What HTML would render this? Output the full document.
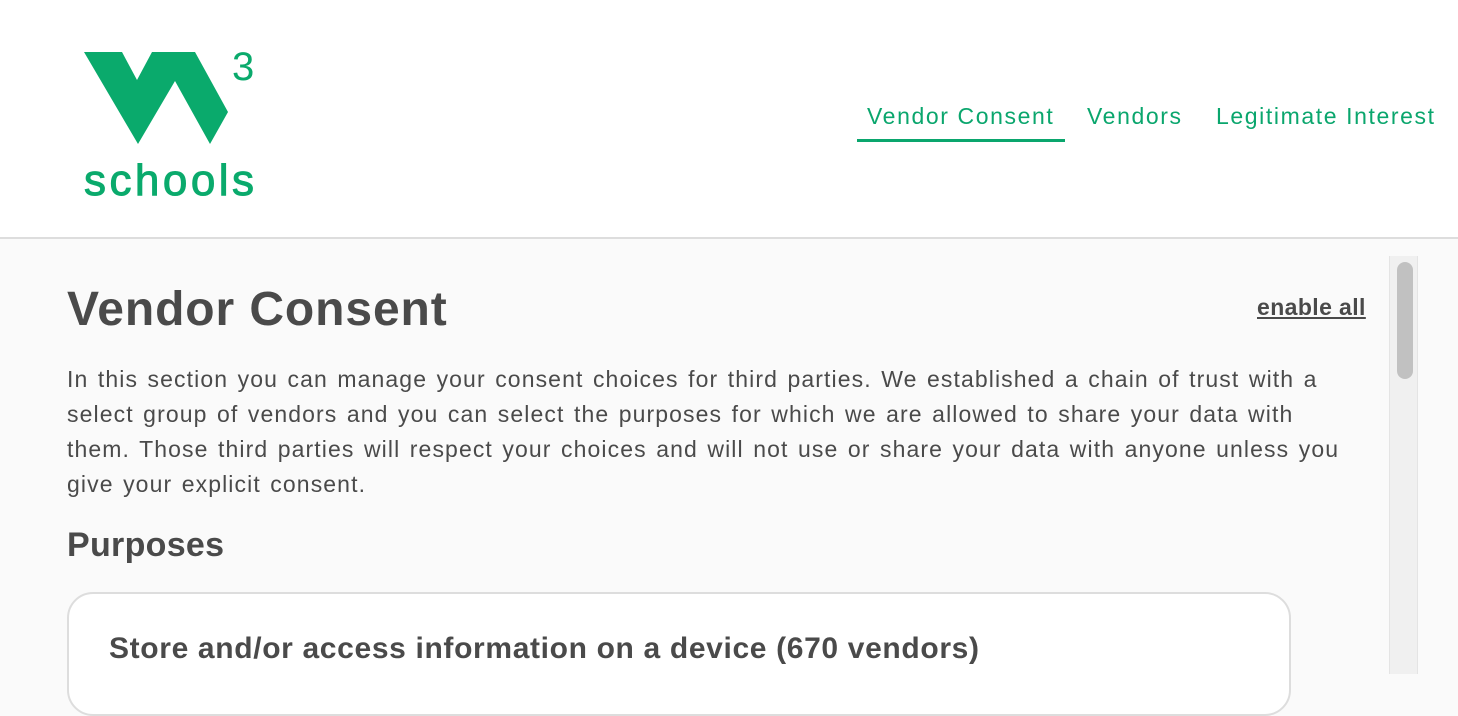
<!DOCTYPE html>
<html><head><meta charset="utf-8"><style>
html,body{margin:0;padding:0;width:1458px;height:674px;overflow:hidden;background:#fafafa;font-family:"Liberation Sans",Arial,sans-serif;}
.header{position:absolute;left:0;top:0;width:1458px;height:237px;background:#fff;border-bottom:2px solid #ddd;}
.nav{position:absolute;top:103px;font-size:23px;color:#0aa66d;letter-spacing:1.6px;}
.ul{position:absolute;left:857px;top:139px;width:208px;height:3px;background:#0aa66d;}
.main{position:absolute;left:0;top:239px;width:1458px;height:435px;background:#fafafa;}
h1{position:absolute;left:67px;top:282px;margin:0;font-size:48px;font-weight:bold;color:#4a4a4a;line-height:56px;letter-spacing:0.9px;}
.en{position:absolute;left:1257px;top:294px;font-size:23px;font-weight:bold;color:#4a4a4a;text-decoration:underline;letter-spacing:0.4px;}
p{position:absolute;left:67px;top:362px;width:1340px;margin:0;font-size:23px;line-height:35px;color:#4a4a4a;letter-spacing:1.1px;word-spacing:2px;white-space:nowrap;}
h2{position:absolute;left:67px;top:526px;margin:0;font-size:34px;font-weight:bold;color:#4a4a4a;letter-spacing:0.3px;}
.card{position:absolute;left:67px;top:592px;width:1220px;height:120px;background:#fff;border:2px solid #ddd;border-radius:26px;}
.card div{position:absolute;left:40px;top:38px;font-size:30px;font-weight:bold;color:#4a4a4a;letter-spacing:0.65px;}
.track{position:absolute;left:1389px;top:256px;width:29px;height:418px;background:#f0f0f0;border-left:1px solid #e4e4e4;border-right:1px solid #e4e4e4;box-sizing:border-box;}
.thumb{position:absolute;left:1397px;top:262px;width:16px;height:117px;background:#c1c1c1;border-radius:8px;}
</style></head><body>
<div class="header">
<svg width="300" height="237" style="position:absolute;left:0;top:0">
<polygon fill="#0aaa6c" points="84,52 122,52 137,80 152,52 195,52 228,112 210,144 175,81 138,144"/>
<text x="232" y="80" font-family="Liberation Sans" font-size="40" fill="#0aaa6c">3</text>
<text x="84" y="195" font-family="Liberation Sans" font-size="44" fill="#0aaa6c" textLength="170" lengthAdjust="spacing" stroke="#0aaa6c" stroke-width="1">schools</text>
</svg>
<span class="nav" style="left:867px">Vendor Consent</span>
<span class="nav" style="left:1087px">Vendors</span>
<span class="nav" style="left:1216px">Legitimate Interest</span>
<div class="ul"></div>
</div>
<div class="main"></div>
<h1>Vendor Consent</h1>
<span class="en">enable all</span>
<p>In this section you can manage your consent choices for third parties. We established a chain of trust with a<br>select group of vendors and you can select the purposes for which we are allowed to share your data with<br>them. Those third parties will respect your choices and will not use or share your data with anyone unless you<br>give your explicit consent.</p>
<h2>Purposes</h2>
<div class="card"><div>Store and/or access information on a device (670 vendors)</div></div>
<div class="track"></div><div class="thumb"></div>
</body></html>
